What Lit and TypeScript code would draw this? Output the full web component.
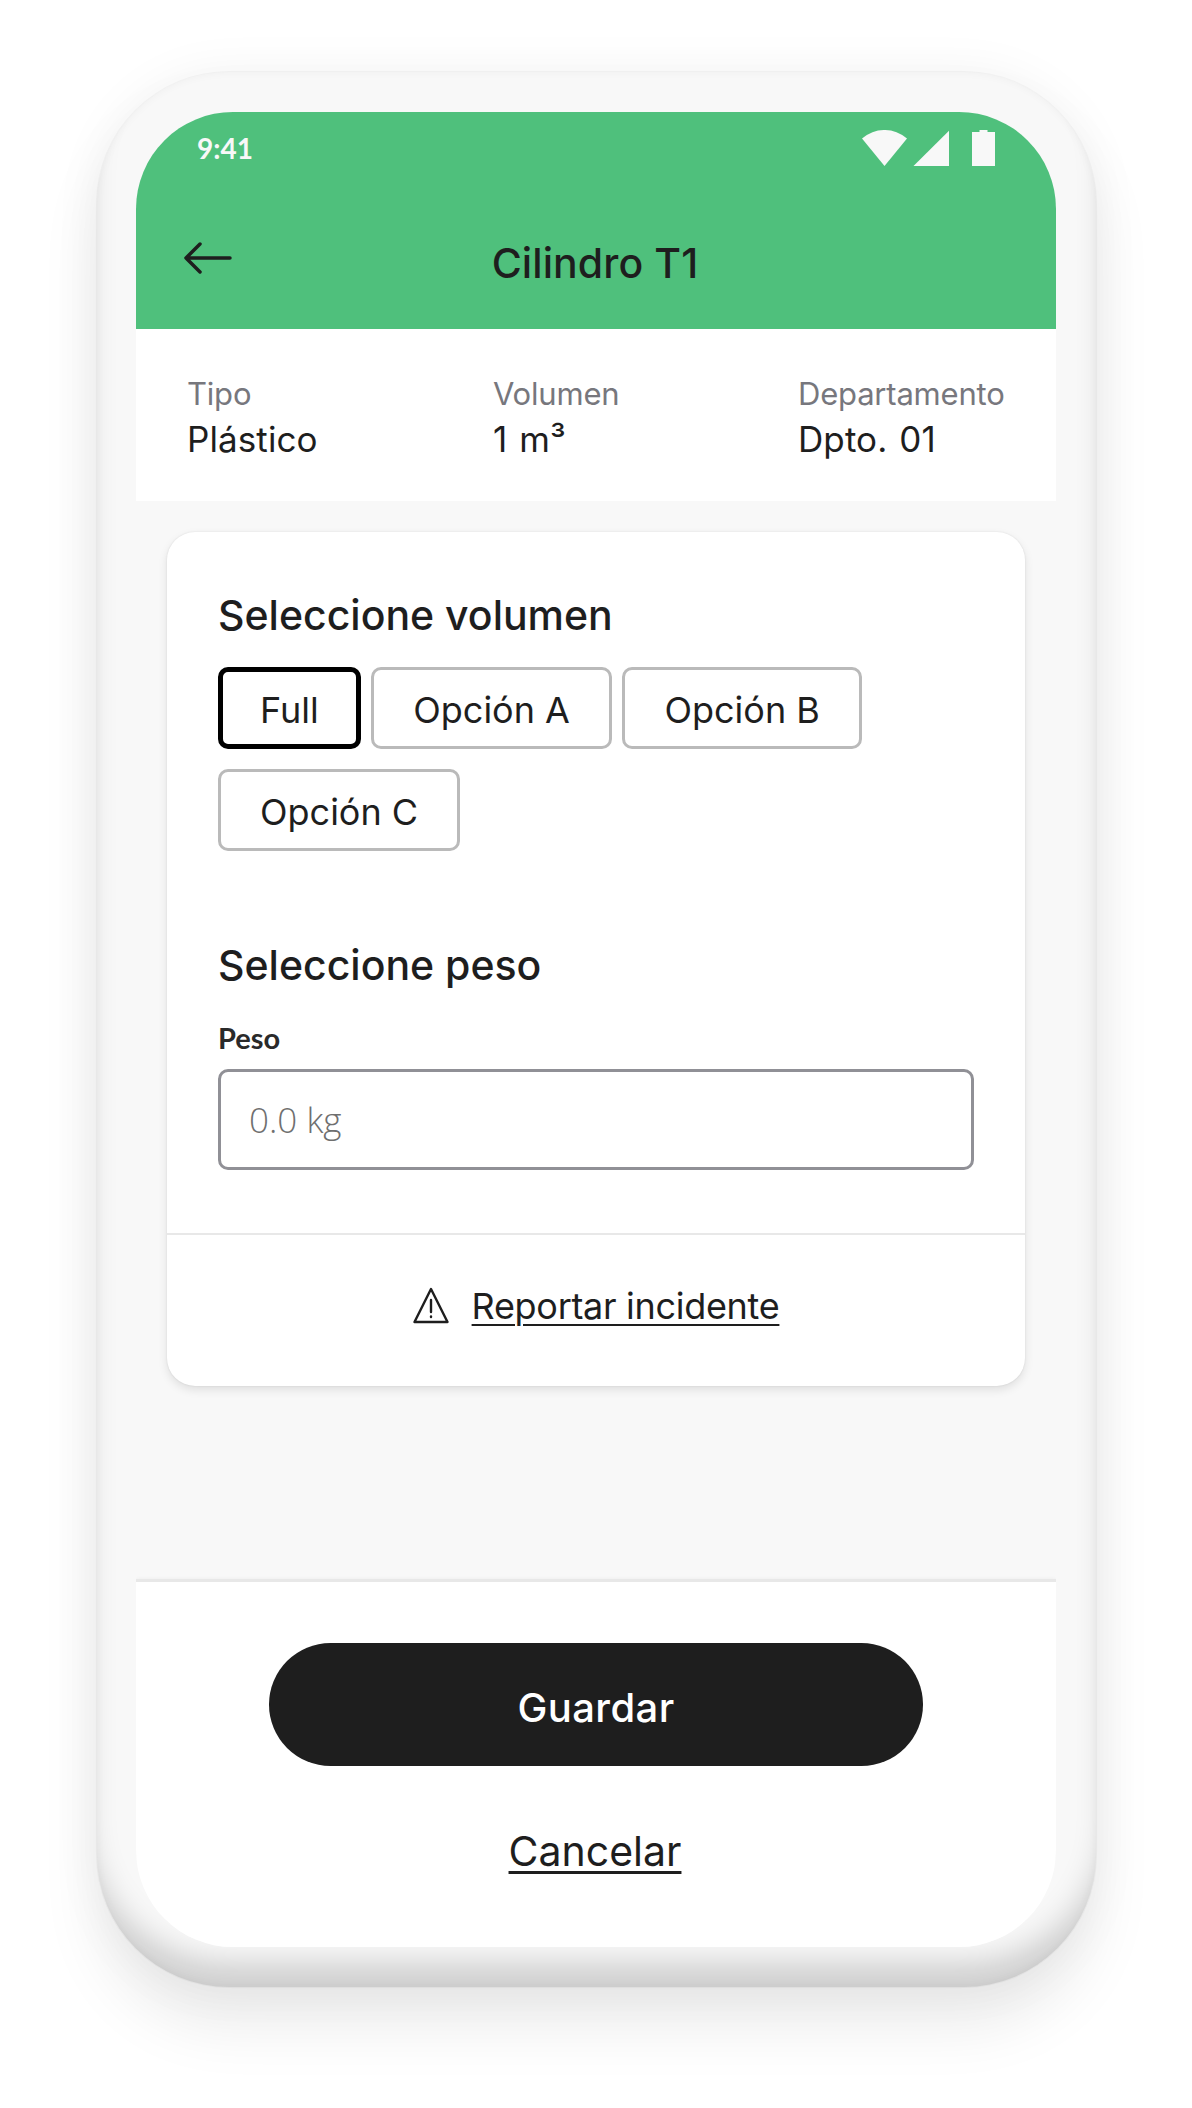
import { LitElement, html, css } from "lit";
import { customElement } from "lit/decorators.js";

@customElement("app-root")
export class AppRoot extends LitElement {
  static styles = css`
    :host {
      display: block;
      width: 1192px;
      height: 2108px;
      box-sizing: border-box;
      padding: 72px 0 0 97px;
      background: #fff;
      overflow: hidden;
      font-family: Inter, "Liberation Sans", sans-serif;
      color: #1e1e1e;
    }
    .phone {
      width: 999px;
      height: 1915px;
      box-sizing: border-box;
      padding: 40px 40px 40px 39px;
      border-radius: 132px;
      background: #f8f8f8;
      box-shadow:
        0 0 0 1px rgba(0, 0, 0, 0.03),
        0 0 50px rgba(0, 0, 0, 0.05),
        0 40px 60px rgba(0, 0, 0, 0.08),
        inset 0 -34px 30px -10px rgba(0, 0, 0, 0.17),
        inset 0 0 10px rgba(0, 0, 0, 0.04);
    }
    .screen {
      height: 1835px;
      border-radius: 97px;
      overflow: hidden;
      display: flex;
      flex-direction: column;
      background: #f8f8f8;
    }
    .header {
      height: 217px;
      flex: none;
      background: #4fc07c;
      display: flex;
      flex-direction: column;
    }
    .status {
      height: 94px;
      display: flex;
      justify-content: space-between;
      padding: 18px 58px 0 61px;
      box-sizing: border-box;
    }
    .time {
      font-family: Lato, sans-serif;
      font-size: 28px;
      line-height: 30px;
      font-weight: 700;
      color: #f8f8f8;
      margin-top: 3px;
    }
    .nav {
      position: relative;
      display: flex;
      justify-content: center;
    }
    .nav h1 {
      margin: 32px 0 0;
      font-size: 41px;
      line-height: 50px;
      font-weight: 500;
      letter-spacing: 0.1px;
      color: #1e1e1e;
      transform: translateX(-1px);
    }
    .back {
      position: absolute;
      left: 47px;
      top: 35px;
    }
    .info {
      height: 172px;
      flex: none;
      box-sizing: border-box;
      background: #fff;
      padding: 44px 0 0 51px;
      display: grid;
      grid-template-columns: 306px 305px auto;
    }
    .info .k {
      font-size: 31px;
      line-height: 42px;
      color: #77777d;
      letter-spacing: -0.2px;
    }
    .info .v {
      font-size: 35px;
      line-height: 48px;
      letter-spacing: 0.1px;
      word-spacing: 2px;
      color: #1e1e1e;
    }
    .content {
      flex: 1;
      padding: 31px 31px 0;
    }
    .card {
      height: 854px;
      background: #fff;
      border-radius: 28px;
      box-shadow: 0 0 2px rgba(0, 0, 0, 0.1), 0 4px 10px rgba(0, 0, 0, 0.1);
      display: flex;
      flex-direction: column;
    }
    .body {
      flex: 1;
      padding: 59px 51px 0;
    }
    h2 {
      margin: 0;
      font-size: 41px;
      line-height: 48px;
      font-weight: 500;
      letter-spacing: 0;
      color: #1e1e1e;
    }
    .chips {
      display: flex;
      flex-wrap: wrap;
      gap: 20px 10.5px;
      margin: 28px 0 90px;
    }
    .chip {
      height: 82px;
      box-sizing: border-box;
      display: flex;
      align-items: center;
      padding: 4px 39px 0;
      border: 3px solid #bababa;
      border-radius: 10px;
      font-size: 36px;
      letter-spacing: 0;
      color: #1e1e1e;
      background: #fff;
    }
    .chip.on {
      border: 5px solid #000;
      padding: 4px 37px 0;
    }
    .label {
      margin: 33px 0 15px;
      font-family: Lato, sans-serif;
      font-size: 29px;
      line-height: 32px;
      font-weight: 700;
      color: #2a2a2a;
    }
    input {
      display: block;
      width: 100%;
      height: 101px;
      box-sizing: border-box;
      padding: 0 28px;
      border: 3px solid #909096;
      border-radius: 10px;
      background: #fff;
      font-family: "Open Sans", sans-serif;
      font-size: 35px;
      font-weight: 300;
      outline: none;
    }
    input::placeholder {
      color: #6f6f6f;
      opacity: 1;
    }
    .report {
      height: 153px;
      flex: none;
      border-top: 2px solid #e8e8e8;
      box-sizing: border-box;
      display: flex;
      align-items: center;
      justify-content: center;
      gap: 23px;
      padding-bottom: 9px;
    }
    .link {
      font-size: 36px;
      line-height: 46px;
      letter-spacing: -0.3px;
      color: #1e1e1e;
      text-decoration: underline;
      text-underline-offset: 5px;
      text-decoration-thickness: 2px;
    }
    .footer {
      height: 368px;
      flex: none;
      box-sizing: border-box;
      background: #fff;
      border-top: 3px solid #e8e8e8;
      box-shadow: 0 -1px 3px rgba(0, 0, 0, 0.03);
      padding-top: 61px;
      display: flex;
      flex-direction: column;
      align-items: center;
    }
    .save {
      width: 654px;
      height: 123px;
      padding: 6px 0 0;
      border: 0;
      border-radius: 62px;
      background: #1e1e1e;
      color: #fff;
      font-family: inherit;
      font-size: 40px;
      font-weight: 500;
      letter-spacing: 0.4px;
    }
    .cancel {
      margin-top: 60px;
      font-size: 41px;
      line-height: 50px;
      letter-spacing: 0;
      color: #1e1e1e;
      text-decoration: underline;
      text-underline-offset: 5px;
      text-decoration-thickness: 3px;
      transform: translateX(-1px);
    }
  `;

  render() {
    return html`
      <div class="phone">
        <div class="screen">
          <div class="header">
            <div class="status">
              <span class="time">9:41</span>
              <svg width="136" height="38" viewBox="0 0 136 38" fill="#f8f8f8">
                <path d="M0 8.5 A34 34 0 0 1 45 8.5 L22.5 36 Z" />
                <path d="M51.5 36 L87 0.7 V36 Z" />
                <path d="M110 2 H117.5 V0 H125.5 V2 H133 V36 H110 Z" />
              </svg>
            </div>
            <div class="nav">
              <svg class="back" width="50" height="34" viewBox="0 0 50 34" fill="none" stroke="#1e1e1e" stroke-width="3.5" stroke-linecap="round" stroke-linejoin="round">
                <path d="M3 17 H47 M17 3 L3 17 L17 31" />
              </svg>
              <h1>Cilindro T1</h1>
            </div>
          </div>
          <div class="info">
            <div><div class="k">Tipo</div><div class="v">Plástico</div></div>
            <div><div class="k">Volumen</div><div class="v">1 m³</div></div>
            <div><div class="k">Departamento</div><div class="v">Dpto. 01</div></div>
          </div>
          <div class="content">
            <div class="card">
              <div class="body">
                <h2>Seleccione volumen</h2>
                <div class="chips">
                  <div class="chip on">Full</div>
                  <div class="chip">Opción A</div>
                  <div class="chip">Opción B</div>
                  <div class="chip">Opción C</div>
                </div>
                <h2>Seleccione peso</h2>
                <div class="label">Peso</div>
                <input placeholder="0.0 kg" />
              </div>
              <div class="report">
                <svg width="36" height="38" viewBox="0 0 36 38" fill="none" stroke="#1e1e1e" stroke-width="2.4" stroke-linejoin="round" stroke-linecap="round">
                  <path d="M18 2 L34.5 35 H1.5 Z" />
                  <path d="M18 13 V25" />
                  <path d="M18 29.5 V30" />
                </svg>
                <span class="link">Reportar incidente</span>
              </div>
            </div>
          </div>
          <div class="footer">
            <button class="save">Guardar</button>
            <span class="cancel">Cancelar</span>
          </div>
        </div>
      </div>
    `;
  }
}
